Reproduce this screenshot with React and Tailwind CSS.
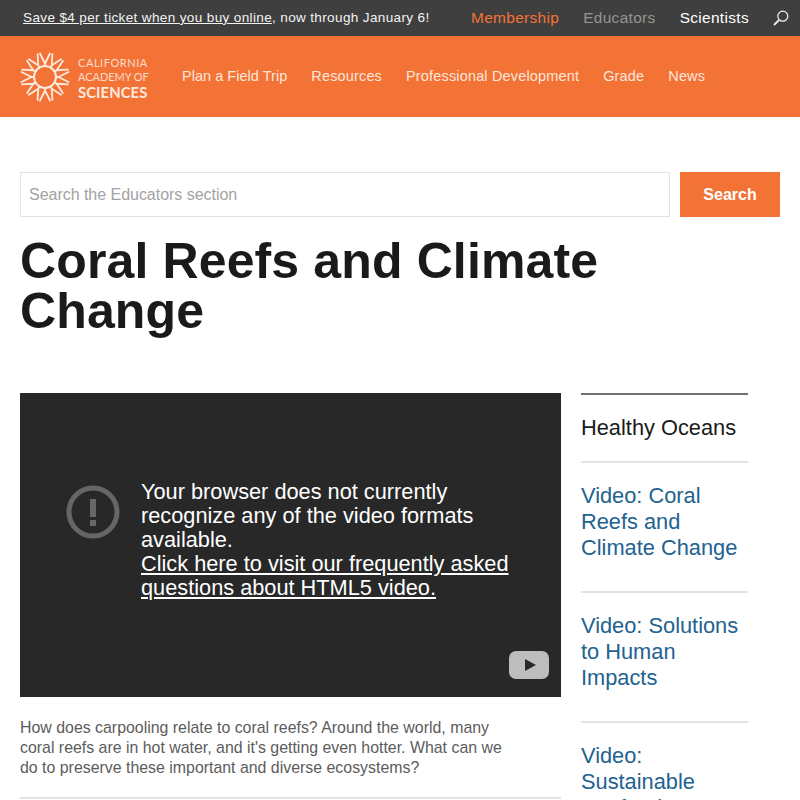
import React from 'react'

const navLinks = [
  { label: "Plan a Field Trip", cls: "tracking-[0.03px]" },
  { label: "Resources", cls: "tracking-[0.16px]" },
  { label: "Professional Development", cls: "tracking-[0.16px]" },
  { label: "Grade", cls: "tracking-[0.16px]" },
  { label: "News", cls: "tracking-[0.16px]" },
]

const Logo = () => {
  const angles = [0, 30, 60, 90, 120, 150, 180, 210, 240, 270, 300, 330]
  return (
    <svg width="50" height="50" viewBox="0 0 50 50" fill="none" stroke="#fdeadf" strokeWidth="1.8" strokeLinecap="round" className="shrink-0">
      <circle cx="25" cy="25" r="11" strokeWidth="2" />
      {angles.map((a) => (
        <g key={a} transform={`rotate(${a} 25 25)`}>
          <path d="M25 14V11" />
          <path d="M25 11.5L20 1.5" />
          <path d="M25 11.5L30 1.5" />
        </g>
      ))}
    </svg>
  )
}

const SideItem = ({ children }) => (
  <div className="border-b-2 border-[#e3e3e3] pt-[20px] pb-[30px] text-[21.8px] leading-[26px] text-[#22628f]">{children}</div>
)

const App = () => {
  return (
    <div className="h-[800px] w-[800px] overflow-hidden bg-white font-['Liberation_Sans',Arial,sans-serif]">
      <div className="flex h-[36px] items-center bg-[#3f3f3f] pl-[23px] pr-[11px] tracking-[0.35px] text-[#f3f3f3]">
        <div className="text-[13.55px]"><a className="underline">Save $4 per ticket when you buy online</a>, now through January 6!</div>
        <div className="ml-auto flex items-center text-[15.4px]">
          <a className="text-[#f47236]">Membership</a>
          <a className="ml-[24px] text-[#959595]">Educators</a>
          <a className="ml-[24px] text-white">Scientists</a>
          <svg width="16" height="16" viewBox="0 0 16 16" fill="none" stroke="#f3f3f3" strokeWidth="1.2" className="ml-[24px]">
            <circle cx="9.8" cy="6.2" r="5" />
            <path d="M6.2 9.8L1 15" strokeWidth="1.8" />
          </svg>
        </div>
      </div>

      <div className="flex h-[81px] items-center bg-[#f37337] pl-[20px]">
        <Logo />
        <div className="ml-[8px] w-[71px] pt-[2px] font-['Lato',sans-serif] text-[#fcdcca]">
          <div className="text-[11px] leading-[14px] tracking-[0.55px]">CALIFORNIA</div>
          <div className="whitespace-nowrap text-[11px] leading-[14px] tracking-[-0.05px]">ACADEMY OF</div>
          <div className="text-[14.8px] leading-[16px] font-bold tracking-[0.1px] text-[#fdeadf]">SCIENCES</div>
        </div>
        <div className="ml-[33px] flex gap-[24px] text-[14.5px] text-[#fde6d9]">
          {navLinks.map((l) => <a key={l.label} className={l.cls}>{l.label}</a>)}
        </div>
      </div>

      <div className="flex gap-[10px] px-[20px] pt-[55px]">
        <div className="flex h-[45px] flex-1 items-center border border-[#e3e3e3] pl-[8px] text-[16px] tracking-[-0.03px] text-[#a3a3a3]">Search the Educators section</div>
        <button className="h-[45px] w-[100px] bg-[#f37337] text-[16px] font-bold text-white">Search</button>
      </div>

      <h1 className="mt-[19px] px-[20px] text-[50px] leading-[50px] font-bold tracking-[0.13px] text-[#1a1a1a]">Coral Reefs and Climate Change</h1>

      <div className="mt-[57px] flex gap-[20px] pl-[20px]">
        <div className="w-[541px] shrink-0">
          <div className="flex h-[304px] flex-col bg-[#282828] pl-[46px] pr-[12px]">
            <div className="flex flex-1 items-start gap-[21px] pt-[87px]">
              <svg width="54" height="54" viewBox="0 0 54 54" fill="none" className="mt-[5px] shrink-0">
                <circle cx="27" cy="27" r="24" stroke="#666666" strokeWidth="5" />
                <rect x="24" y="14" width="6" height="18" fill="#666666" />
                <rect x="24" y="35" width="6" height="6" fill="#666666" />
              </svg>
              <div className="w-[380px] text-[21.75px] leading-[24px] text-white">
                Your browser does not currently recognize any of the video formats available.<br />
                <a className="underline">Click here to visit our frequently asked questions about HTML5 video.</a>
              </div>
            </div>
            <div className="flex justify-end pb-[18px]">
              <svg width="40" height="28" viewBox="0 0 40 28">
                <rect width="40" height="28" rx="7" fill="#bdbdbd" />
                <path d="M16 8L27 14L16 20Z" fill="#282828" />
              </svg>
            </div>
          </div>
          <p className="mt-[21px] w-[490px] text-[15.9px] leading-[20px] text-[#5c5c5c]">How does carpooling relate to coral reefs? Around the world, many coral reefs are in hot water, and it's getting even hotter. What can we do to preserve these important and diverse ecosystems?</p>
          <div className="mt-[19px] h-[2px] bg-[#e3e3e3]"></div>
        </div>

        <div className="w-[167px] shrink-0 border-t-2 border-[#707070]">
          <div className="border-b-2 border-[#e3e3e3] pt-[19px] pb-[19px] text-[21.8px] leading-[28px] text-[#1a1a1a]">Healthy Oceans</div>
          <SideItem>Video: Coral Reefs and Climate Change</SideItem>
          <SideItem>Video: Solutions to Human Impacts</SideItem>
          <SideItem>Video: Sustainable Seafood</SideItem>
        </div>
      </div>
    </div>
  )
}

export default App
